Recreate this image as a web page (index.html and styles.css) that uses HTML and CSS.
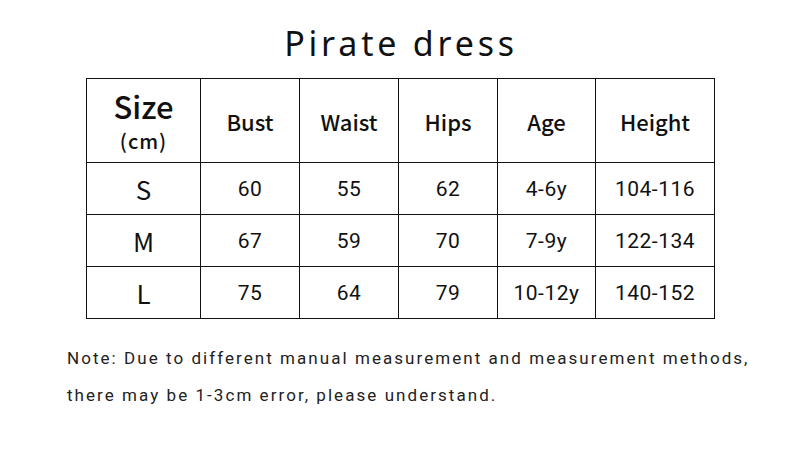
FILE: index.html
```html
<!DOCTYPE html>
<html>
<head>
<meta charset="utf-8">
<link rel="stylesheet" href="styles.css">
</head>
<body>
<div class="page">
  <h1 class="title">Pirate dress</h1>
  <table class="chart">
    <colgroup>
      <col class="c1"><col class="c2"><col class="c3"><col class="c4"><col class="c5"><col class="c6">
    </colgroup>
    <tr class="head">
      <th class="size"><span class="big">Size</span><span class="unit">(cm)</span></th>
      <th>Bust</th><th>Waist</th><th>Hips</th><th>Age</th><th>Height</th>
    </tr>
    <tr class="row"><th class="sz">S</th><td>60</td><td>55</td><td>62</td><td>4-6y</td><td>104-116</td></tr>
    <tr class="row"><th class="sz">M</th><td>67</td><td>59</td><td>70</td><td>7-9y</td><td>122-134</td></tr>
    <tr class="row"><th class="sz">L</th><td>75</td><td>64</td><td>79</td><td>10-12y</td><td>140-152</td></tr>
  </table>
  <p class="note">Note: Due to different manual measurement and measurement methods,</p>
  <p class="note">there may be 1-3cm error, please understand.</p>
</div>
</body>
</html>
```
FILE: styles.css
```css
html, body { margin: 0; padding: 0; background: #fff; }
body { width: 800px; height: 453px; overflow: hidden; color: #111; }
.page { padding-top: 21px; }
.title {
  margin: 0;
  text-align: center;
  font-family: "Noto Sans", "Noto Sans CJK SC", sans-serif;
  font-weight: 400;
  font-size: 34px;
  letter-spacing: 3.8px;
  line-height: 44px;
  height: 44px;
  padding-left: 2px;
}
.chart {
  margin: 13px 0 0 86px;
  border-collapse: collapse;
  table-layout: fixed;
  width: 629px;
}
.c1 { width: 114px; } .c2 { width: 99px; } .c3 { width: 99px; }
.c4 { width: 99px; } .c5 { width: 98px; } .c6 { width: 119px; }
.chart th, .chart td {
  border: 1.5px solid #111;
  text-align: center;
  padding: 0;
  font-weight: 400;
}
.head { height: 84px; }
.head th {
  font-family: "Noto Sans CJK SC", "Noto Sans", sans-serif;
  font-size: 22px;
  font-weight: 500;
}
.size { line-height: 1; }
.size .big { display: block; font-size: 31px; font-weight: 500; line-height: 38px; margin-top: 1px; }
.size .unit { display: block; font-size: 20px; line-height: 28px; letter-spacing: 1px; margin-top: 2px; }
.row { height: 52px; }
.row td {
  font-family: "Roboto", "Liberation Sans", sans-serif;
  font-size: 21px;
  letter-spacing: 0.5px;
}
.row .sz {
  font-family: "Noto Sans CJK SC", "Noto Sans", sans-serif;
  font-size: 26px;
  font-weight: 400;
}
.note {
  margin: 0;
  padding-left: 67px;
  font-family: "Roboto", "Liberation Sans", sans-serif;
  font-size: 17px;
  letter-spacing: 2.05px;
  line-height: 37px;
  color: #222;
}
.chart + .note { margin-top: 21px; }
```
